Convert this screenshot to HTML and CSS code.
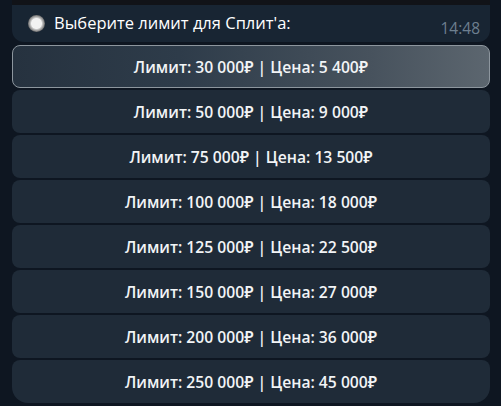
FILE: index.html
```html
<!DOCTYPE html>
<html lang="ru">
<head>
<meta charset="utf-8">
<link rel="stylesheet" href="styles.css">
</head>
<body>
<div class="chat">
  <div class="strip"></div>
  <div class="bubble">
    <span class="radio"></span>
    <span class="title">Выберите лимит для Сплит'а:</span>
    <span class="time">14:48</span>
  </div>
  <div class="buttons">
    <div class="btn active">Лимит: 30 000₽ | Цена: 5 400₽</div>
    <div class="btn">Лимит: 50 000₽ | Цена: 9 000₽</div>
    <div class="btn">Лимит: 75 000₽ | Цена: 13 500₽</div>
    <div class="btn">Лимит: 100 000₽ | Цена: 18 000₽</div>
    <div class="btn">Лимит: 125 000₽ | Цена: 22 500₽</div>
    <div class="btn">Лимит: 150 000₽ | Цена: 27 000₽</div>
    <div class="btn">Лимит: 200 000₽ | Цена: 36 000₽</div>
    <div class="btn last">Лимит: 250 000₽ | Цена: 45 000₽</div>
  </div>
</div>
</body>
</html>
```
FILE: styles.css
```css
* { box-sizing: border-box; }
html, body { margin: 0; padding: 0; }
body {
  background: #0e1621;
  width: 501px;
  height: 406px;
  overflow: hidden;
  font-family: "Open Sans", "Noto Sans", sans-serif;
  color: #ffffff;
}
.chat {
  margin-left: 12px;
  width: 478px;
}
.strip {
  height: 5px;
  background: #111318;
}
.bubble {
  height: 37px;
  background: #182533;
  border-radius: 0 0 12px 12px;
  display: flex;
  align-items: center;
  padding-left: 16px;
  position: relative;
}
.radio {
  width: 17px;
  height: 17px;
  border-radius: 50%;
  background: radial-gradient(circle, #f2f2f2 0 5px, #c4c4c4 6px, #6a6a6a 8.5px);
  margin-top: -1px;
  flex: none;
}
.title {
  margin-left: 9px;
  font-size: 16.5px;
  font-weight: 500;
  margin-top: -2px;
}
.time {
  position: absolute;
  right: 10px;
  bottom: 3px;
  font-size: 15.5px;
  color: #6d7f8f;
}
.buttons {
  margin-top: 3px;
  display: flex;
  flex-direction: column;
  gap: 2px;
}
.btn {
  height: 43px;
  border-radius: 8px;
  background: #1f2b38;
  display: flex;
  align-items: center;
  justify-content: center;
  font-size: 15.7px;
  font-weight: 600;
  color: #f2f4f6;
}
.btn.active {
  background: linear-gradient(90deg, #26323f 0%, #2e3c4a 35%, #47525d 75%, #5c666f 100%);
  border: 1px solid #8d969e;
}
.btn.last {
  border-radius: 8px 8px 16px 16px;
}
```
